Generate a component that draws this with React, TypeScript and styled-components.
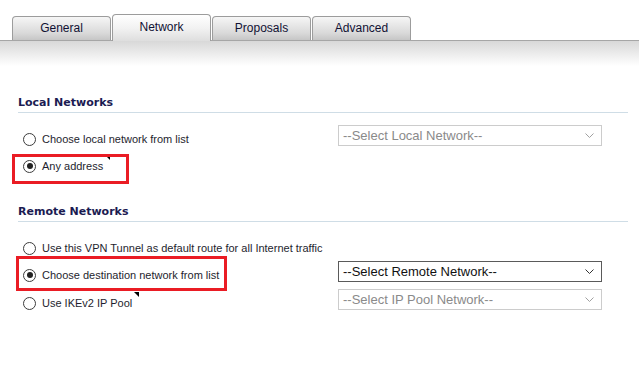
import React from "react";
import styled, { createGlobalStyle, css } from "styled-components";

const GlobalStyle = createGlobalStyle`
  html, body { margin: 0; padding: 0; background: #ffffff; }
  body { font-family: "Liberation Sans", Arial, sans-serif; }
`;

const Page = styled.div`
  width: 639px;
  height: 373px;
  overflow: hidden;
  background: #fff;
`;

const TabBar = styled.div`
  display: flex;
  align-items: flex-end;
  height: 40px;
  padding-left: 12px;
  border-bottom: 1px solid #a6a6a6;
  box-sizing: content-box;
`;

const Tab = styled.div<{ $active?: boolean }>`
  box-sizing: border-box;
  width: 99px;
  height: 24px;
  margin-right: 1px;
  display: flex;
  align-items: center;
  justify-content: center;
  padding-bottom: 1px;
  font-family: "Liberation Sans", Arial, sans-serif;
  font-size: 12px;
  color: #111133;
  border: 1px solid #9c9c9c;
  border-bottom: none;
  border-radius: 4px 4px 0 0;
  background: linear-gradient(#f6f6f6, #d9d9d9 70%, #c6c6c6);
  ${(p) =>
    p.$active &&
    css`
      height: 27px;
      margin-bottom: -1px;
      padding-bottom: 3px;
      background: linear-gradient(#ffffff, #f2f2f2 50%, #dedede);
    `}
`;

const Band = styled.div`
  height: 25px;
  background: linear-gradient(#d8d8d8, #ffffff);
`;

const Section = styled.section<{ $top: number }>`
  padding: 0 11px 0 18px;
  margin-top: ${(p) => p.$top}px;
`;

const Heading = styled.h3`
  margin: 0 0 12px;
  font-family: "DejaVu Sans", Verdana, sans-serif;
  font-size: 11px;
  font-weight: bold;
  line-height: 13px;
  color: #1b1b52;
  padding-bottom: 3px;
  border-bottom: 1px solid #cfdde6;
`;

const Row = styled.div<{ $h?: number }>`
  position: relative;
  display: flex;
  align-items: flex-start;
  height: ${(p) => p.$h ?? 27}px;
`;

const Choice = styled.label`
  width: 320px;
  height: 28px;
  display: flex;
  align-items: center;
  gap: 6px;
  padding-left: 5px;
  box-sizing: border-box;
  font-family: "Liberation Sans", Tahoma, Arial, sans-serif;
  font-size: 11px;
  color: #1e1e2e;
  white-space: nowrap;
`;

const Radio = styled.span<{ $checked?: boolean }>`
  position: relative;
  width: 13px;
  height: 13px;
  box-sizing: border-box;
  border-radius: 50%;
  border: 1px solid #3c3c3c;
  background: #fff;
  flex: none;
  ${(p) =>
    p.$checked &&
    css`
      &::after {
        content: "";
        position: absolute;
        left: 2.5px;
        top: 2.5px;
        width: 6px;
        height: 6px;
        border-radius: 50%;
        background: #222;
      }
    `}
`;

const Marker = styled.span`
  display: inline-block;
  width: 0;
  height: 0;
  border-top: 5px solid #000;
  border-left: 5px solid transparent;
  margin-left: -4px;
  align-self: flex-start;
  margin-top: 3px;
`;

const Select = styled.div<{ $disabled?: boolean }>`
  box-sizing: border-box;
  width: 264px;
  height: 21px;
  display: flex;
  align-items: center;
  justify-content: space-between;
  padding: 0 7px 0 4px;
  font-family: "Liberation Sans", Tahoma, Arial, sans-serif;
  font-size: 13px;
  color: ${(p) => (p.$disabled ? "#8a8a8a" : "#111")};
  border: 1px solid ${(p) => (p.$disabled ? "#cccccc" : "#5a5a5a")};
  background: #fff;
`;

const Highlight = styled.div<{ $left: number; $top: number; $w: number; $h: number }>`
  position: absolute;
  left: ${(p) => p.$left}px;
  top: ${(p) => p.$top}px;
  width: ${(p) => p.$w}px;
  height: ${(p) => p.$h}px;
  box-sizing: border-box;
  border: 3px solid #ea1c24;
  pointer-events: none;
`;

const Chevron = ({ color }: { color: string }) => (
  <svg width="9" height="5" viewBox="0 0 9 5">
    <path d="M0.5 0.5 L4.5 4.5 L8.5 0.5" fill="none" stroke={color} strokeWidth="1" />
  </svg>
);

export default function App() {
  return (
    <Page>
      <GlobalStyle />
      <TabBar>
        <Tab>General</Tab>
        <Tab $active>Network</Tab>
        <Tab>Proposals</Tab>
        <Tab>Advanced</Tab>
      </TabBar>
      <Band />
      <Section $top={30}>
        <Heading>Local Networks</Heading>
        <Row>
          <Choice>
            <Radio />
            Choose local network from list
          </Choice>
          <Select $disabled>
            --Select Local Network--
            <Chevron color="#a0a0a0" />
          </Select>
        </Row>
        <Row>
          <Highlight $left={-6} $top={2} $w={117} $h={30} />
          <Choice>
            <Radio $checked />
            <span>Any address</span>
            <Marker />
          </Choice>
        </Row>
      </Section>
      <Section $top={26}>
        <Heading>Remote Networks</Heading>
        <Row>
          <Choice>
            <Radio />
            Use this VPN Tunnel as default route for all Internet traffic
          </Choice>
        </Row>
        <Row $h={28}>
          <Highlight $left={-2} $top={-5} $w={211} $h={35} />
          <Choice>
            <Radio $checked />
            Choose destination network from list
          </Choice>
          <Select>
            --Select Remote Network--
            <Chevron color="#333" />
          </Select>
        </Row>
        <Row>
          <Choice>
            <Radio />
            <span>Use IKEv2 IP Pool</span>
            <Marker />
          </Choice>
          <Select $disabled>
            --Select IP Pool Network--
            <Chevron color="#a0a0a0" />
          </Select>
        </Row>
      </Section>
    </Page>
  );
}
